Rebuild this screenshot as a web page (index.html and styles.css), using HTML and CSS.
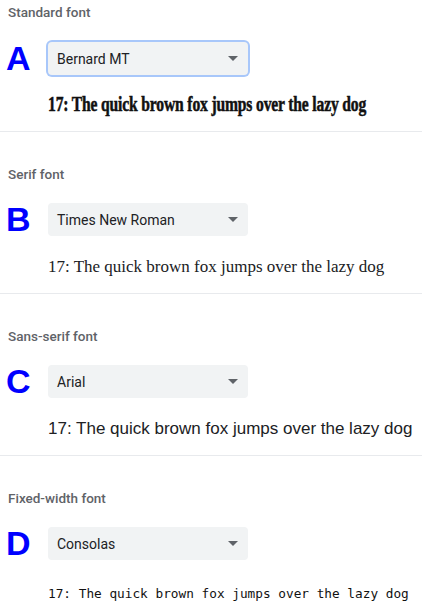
FILE: index.html
```html
<!DOCTYPE html>
<html>
<head>
<meta charset="utf-8">
<link rel="stylesheet" href="styles.css">
</head>
<body>
<div class="page">
  <section class="sec sec-first">
    <div class="label">Standard font</div>
    <div class="row">
      <span class="letter">A</span>
      <div class="select focused"><span>Bernard MT</span><i class="arrow"></i></div>
    </div>
    <div class="sample s-bernard">17: The quick brown fox jumps over the lazy dog</div>
  </section>
  <section class="sec">
    <div class="label">Serif font</div>
    <div class="row">
      <span class="letter">B</span>
      <div class="select"><span>Times New Roman</span><i class="arrow"></i></div>
    </div>
    <div class="sample s-serif">17: The quick brown fox jumps over the lazy dog</div>
  </section>
  <section class="sec">
    <div class="label">Sans-serif font</div>
    <div class="row">
      <span class="letter">C</span>
      <div class="select"><span>Arial</span><i class="arrow"></i></div>
    </div>
    <div class="sample s-sans">17: The quick brown fox jumps over the lazy dog</div>
  </section>
  <section class="sec">
    <div class="label">Fixed-width font</div>
    <div class="row">
      <span class="letter">D</span>
      <div class="select"><span>Consolas</span><i class="arrow"></i></div>
    </div>
    <div class="sample s-mono">17: The quick brown fox jumps over the lazy dog</div>
  </section>
</div>
</body>
</html>
```

FILE: styles.css
```css
html, body {
  margin: 0;
  padding: 0;
  background: #ffffff;
  overflow: hidden;
}
body {
  font-family: Roboto, "Liberation Sans", Arial, sans-serif;
  width: 422px;
  height: 613px;
}
.page {
  display: flex;
  flex-direction: column;
}
.sec {
  height: 162px;
  border-top: 1px solid #e8eaed;
  display: flex;
  flex-direction: column;
  padding-top: 33px;
  box-sizing: border-box;
}
.sec-first {
  border-top: none;
  height: 131px;
  padding-top: 3px;
}
.label {
  font-size: 13.5px;
  font-weight: 500;
  color: #5f6368;
  line-height: 18px;
  padding-left: 8px;
}
.row {
  display: flex;
  align-items: center;
  margin-top: 20px;
  height: 33px;
}
.sec-first .row {
  margin-top: 21px;
}
.letter {
  width: 48px;
  padding-left: 6px;
  box-sizing: border-box;
  font-family: "Liberation Sans", Arial, sans-serif;
  font-weight: bold;
  font-size: 34px;
  line-height: 33px;
  color: #0000ff;
}
.select {
  width: 200px;
  height: 33px;
  background: #f1f3f4;
  border-radius: 4px;
  display: flex;
  align-items: center;
  justify-content: space-between;
  padding: 0 9px;
  box-sizing: border-box;
  font-size: 14px;
  color: #202124;
}
.select.focused {
  box-shadow: 0 0 0 2px #a8c7fa;
}
.arrow {
  width: 0;
  height: 0;
  border-left: 5px solid transparent;
  border-right: 5px solid transparent;
  border-top: 5px solid #5f6368;
  margin-right: 1px;
}
.sample {
  margin-top: 21px;
  padding-left: 48px;
  white-space: nowrap;
  color: #202124;
  line-height: 20px;
}
.s-bernard {
  margin-top: 19px;
  font-family: "Liberation Serif", "Times New Roman", serif;
  font-weight: bold;
  font-size: 20px;
  color: #111111;
  transform: scaleX(0.78);
  transform-origin: 48px 50%;
  letter-spacing: -0.2px;
  -webkit-text-stroke: 0.5px #111111;
}
.s-serif {
  font-family: "Liberation Serif", "Times New Roman", serif;
  font-size: 17px;
}
.s-sans {
  font-family: "Liberation Sans", Arial, sans-serif;
  font-size: 17px;
}
.s-mono {
  margin-top: 24px;
  font-family: "DejaVu Sans Mono", monospace;
  font-size: 12.75px;
  color: #111111;
}
```
